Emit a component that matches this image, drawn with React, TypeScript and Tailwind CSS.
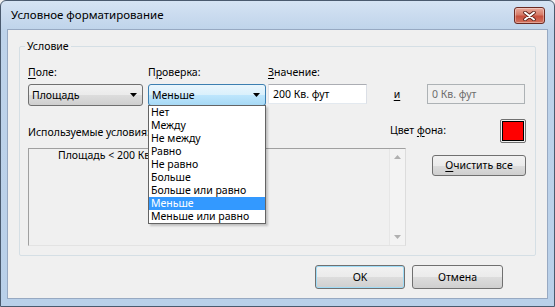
import React from 'react';

const font = "font-['Noto_Sans','DejaVu_Sans',sans-serif]";

const face =
  'rounded-[3px] border border-[#707070] bg-[linear-gradient(#f2f2f2,#ebebeb_50%,#dddddd_50%,#cfcfcf)] text-black';
const btn = `${face} flex items-center justify-center`;

const ComboArrow = () => (
  <svg width="7" height="4" viewBox="0 0 7 4">
    <path d="M0 0h7L3.5 4z" fill="#000" />
  </svg>
);

const Acc: React.FC<{ children: React.ReactNode }> = ({ children }) => (
  <span className="underline decoration-1 underline-offset-[2px]">{children}</span>
);

const options = [
  'Нет',
  'Между',
  'Не между',
  'Равно',
  'Не равно',
  'Больше',
  'Больше или равно',
  'Меньше',
  'Меньше или равно',
];

const App: React.FC = () => {
  return (
    <div className={`${font} h-[307px] w-[555px] overflow-hidden bg-[#f0f0f0] text-[10.5px] leading-[15px] text-black`}>
      <div className="flex h-full w-full flex-col rounded-t-[6px] border border-[#4a5a6e] bg-[linear-gradient(to_bottom,#d5e3f3,#bed3ea_30px,#b9d0e9)]">
        {/* title bar */}
        <div className="flex h-[28px] items-center justify-between pl-[10px] pr-[9px]">
          <span className="text-[11.5px] leading-[16px] text-black">Условное форматирование</span>
          <div className="mt-[6px] flex h-[17px] w-[31px] items-center justify-center self-start rounded-[3px] border border-[#6a2a22] bg-[linear-gradient(#e9a99b,#d67b68_45%,#c7503e_55%,#d3735f)] shadow-[inset_0_0_0_1px_rgba(255,255,255,0.35)]">
            <svg width="13" height="10" viewBox="0 0 13 10">
              <path d="M2 1.5l9 7M11 1.5l-9 7" stroke="#5a2018" strokeWidth="3.6" strokeLinecap="round" />
              <path d="M2 1.5l9 7M11 1.5l-9 7" stroke="#ffffff" strokeWidth="2" strokeLinecap="round" />
            </svg>
          </div>
        </div>

        {/* client area */}
        <div className="mx-[6px] flex h-[270px] flex-col border border-[#97a9c2] bg-[#f0f0f0]">
          <div className="relative mx-[11px] mt-[16px] h-[210px] rounded-[2px] border border-[#d5dfe5] pl-[8px] pr-[9px] pt-[18px]">
            <span className="absolute left-[5px] top-[-8px] bg-[#f0f0f0] px-[2px]">Условие</span>

            {/* labels */}
            <div className="flex h-[15px]">
              <div className="w-[120px]">
                <Acc>П</Acc>оле:
              </div>
              <div className="w-[120px]">
                П<Acc>р</Acc>оверка:
              </div>
              <div>
                <Acc>З</Acc>начение:
              </div>
            </div>

            {/* controls */}
            <div className="mt-[4px] flex h-[22px] items-start">
              <div className={`${face} flex h-[22px] w-[115px] items-center justify-between pl-[3px] pr-[5px]`}>
                <span>Площадь</span>
                <ComboArrow />
              </div>
              <div className="relative ml-[5px] h-[22px] w-[118px]">
                <div className="flex h-[22px] w-full items-center justify-between rounded-[3px] border border-[#3c7fb1] bg-[linear-gradient(#eaf6fd,#d9f0fc_50%,#bee6fd_50%,#a7d9f5)] pl-[3px] pr-[5px]">
                  <span>Меньше</span>
                  <ComboArrow />
                </div>
                {/* open dropdown */}
                <div className="absolute left-0 top-[21px] z-10 w-[118px] border border-[#646464] bg-white shadow-[2px_2px_2px_rgba(0,0,0,0.2)]">
                  {options.map((o) => (
                    <div
                      key={o}
                      className={`h-[13px] whitespace-nowrap pl-[2px] leading-[13px] ${
                        o === 'Меньше' ? 'bg-[#3399ff] text-white' : ''
                      }`}
                    >
                      {o}
                    </div>
                  ))}
                </div>
              </div>
              <div className="ml-[2px] flex h-[20px] w-[99px] items-center border border-[#abadb3] border-b-[#e3e9ef] border-l-[#e2e3ea] border-r-[#dbdfe6] bg-white pl-[4px]">
                200 Кв. фут
              </div>
              <div className="flex h-[20px] w-[60px] items-center justify-center">
                <Acc>и</Acc>
              </div>
              <div className="flex h-[20px] w-[98px] items-center border border-[#adb2b5] bg-[#f0f0f0] pl-[4px] text-[#6d6d6d]">
                0 Кв. фут
              </div>
            </div>

            {/* used conditions / background colour */}
            <div className="mt-[13px] flex h-[24px] items-center justify-between">
              <span className="mt-[3px]">Используемые условия:</span>
              <div className="flex items-center">
                <span className="mr-[54px] mt-[-2px]">
                  Цвет <Acc>ф</Acc>она:
                </span>
                <div className="flex h-[24px] w-[26px] items-center justify-center rounded-[2px] border border-[#707070] bg-[#f0f0f0]">
                  <div className="h-[20px] w-[22px] border border-black bg-[#ff0000]" />
                </div>
              </div>
            </div>

            {/* list + clear button */}
            <div className="mt-[5px] flex items-start justify-between">
              <div className="flex h-[98px] w-[378px] border border-[#a0a0a0] border-b-[#e3e3e3] border-r-[#dcdcdc] bg-[#f0f0f0]">
                <div className="flex-1 whitespace-nowrap pl-[29px] leading-[12px]">Площадь &lt; 200 Кв. фут</div>
                <div className="flex w-[16px] flex-col items-center justify-between border-l border-[#e6e6e6] bg-[#f3f3f3] py-[6px]">
                  <svg width="7" height="4" viewBox="0 0 7 4">
                    <path d="M0 4h7L3.5 0z" fill="#b0b0b0" />
                  </svg>
                  <svg width="7" height="4" viewBox="0 0 7 4">
                    <path d="M0 0h7L3.5 4z" fill="#b0b0b0" />
                  </svg>
                </div>
              </div>
              <div className={`${btn} mt-[7px] h-[21px] w-[94px]`}>
                <span>
                  <Acc>О</Acc>чистить все
                </span>
              </div>
            </div>
          </div>

          {/* dialog buttons */}
          <div className="mt-[9px] flex justify-end gap-[7px] pr-[44px]">
            <div className={`${btn} h-[24px] w-[90px] border-[#3c7fb1] shadow-[inset_0_0_0_1px_#9fdcf7]`}>OK</div>
            <div className={`${btn} h-[24px] w-[91px]`}>Отмена</div>
          </div>
        </div>
      </div>
    </div>
  );
};

export default App;
